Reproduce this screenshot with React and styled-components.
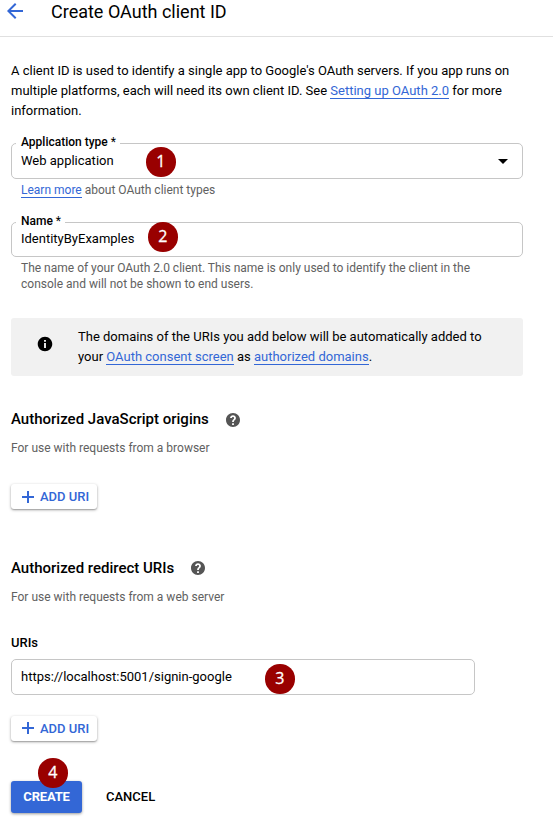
import React from 'react';
import styled, { createGlobalStyle } from 'styled-components';

const GlobalStyle = createGlobalStyle`
  * { box-sizing: border-box; }
  body {
    margin: 0;
    background: #fff;
    color: #000;
    font-family: Roboto, "Liberation Sans", sans-serif;
    font-size: 13px;
    line-height: 20px;
    overflow: hidden;
  }
`;

const Page = styled.div`
  width: 553px;
  height: 821px;
  background: #fff;
`;

const Header = styled.header`
  display: flex;
  align-items: flex-start;
  height: 37px;
  padding-left: 3px;
  border-bottom: 1px solid #e0e0e0;
`;

const BackIcon = styled.svg`
  width: 24px;
  height: 24px;
  margin: -1px 24px 0 0;
  fill: #3367d6;
`;

const Title = styled.h1`
  margin: 0;
  font-size: 18px;
  font-weight: 400;
  line-height: 24px;
  white-space: nowrap;
`;

const Main = styled.main`
  display: flex;
  flex-direction: column;
  align-items: flex-start;
  padding: 24px 0 0 11px;
`;

const Paragraph = styled.p`
  margin: 0;
  white-space: nowrap;
`;

const Link = styled.a`
  color: #3367d6;
  text-decoration: none;
  box-shadow: inset 0 -1px 0 #3367d6;
  display: inline-block;
  line-height: 16px;
`;

const Field = styled.div`
  position: relative;
  display: flex;
  align-items: center;
  justify-content: space-between;
  width: ${(p) => p.$width || 512}px;
  height: ${(p) => p.$height || 36}px;
  margin-top: ${(p) => p.$gap}px;
  padding: 0 9px;
  border: 1px solid #c6c6c6;
  border-radius: 5px;
`;

const FieldValue = styled.span`
  line-height: 18px;
  padding-bottom: ${(p) => p.$lift || 0}px;
`;

const FieldLabel = styled.label`
  position: absolute;
  top: -10px;
  left: 4px;
  padding: 0 4px 0 5px;
  background: #fff;
  font-size: 12px;
  font-weight: 500;
  line-height: 16px;
  white-space: nowrap;
`;

const Required = styled.span`
  font-weight: 400;
`;

const Caret = styled.svg`
  width: 10px;
  height: 5px;
  margin-right: 5px;
  fill: #000;
`;

const Hint = styled.p`
  margin: ${(p) => p.$gap}px 0 0 ${(p) => p.$indent || 0}px;
  color: #616161;
  font-size: 12px;
  line-height: 16px;
  white-space: nowrap;
`;

const Notice = styled.aside`
  display: flex;
  align-items: center;
  width: 512px;
  height: 58px;
  margin-top: 26px;
  padding-left: 26px;
  border-radius: 3px;
  background: #f1f1f1;
`;

const NoticeIcon = styled.svg`
  width: 16px;
  height: 16px;
  margin: -6px 25px 0 0;
  fill: #000;
`;

const SectionHead = styled.div`
  display: flex;
  align-items: center;
  gap: 17px;
  height: 24px;
  margin-top: ${(p) => p.$gap}px;
`;

const SectionTitle = styled.h2`
  margin: 0;
  font-size: 15px;
  font-weight: 500;
  white-space: nowrap;
`;

const HelpIcon = styled.svg`
  width: 14px;
  height: 14px;
  margin-top: ${(p) => p.$drop || 0}px;
  fill: #555;
`;

const AddButton = styled.button`
  display: flex;
  align-items: center;
  width: 86px;
  height: 25px;
  margin-top: ${(p) => p.$gap}px;
  padding: 0 0 0 11px;
  border: 0;
  border-radius: 3px;
  background: #fff;
  color: #3367d6;
  box-shadow: 0 1px 3px rgba(0, 0, 0, 0.35), 0 1px 1px rgba(0, 0, 0, 0.14);
  font: 500 13px/24px Roboto, sans-serif;
  white-space: nowrap;
`;

const PlusIcon = styled.svg`
  width: 12px;
  height: 12px;
  margin: ${(p) => p.$shift}px 6px 0 0;
  stroke: #3367d6;
  stroke-width: 2;
`;

const GroupLabel = styled.div`
  margin-top: 28px;
  font-size: 13px;
  font-weight: 500;
`;

const Actions = styled.div`
  position: relative;
  display: flex;
  gap: 24px;
  height: 32px;
  margin-top: 40px;
`;

const ActionButton = styled.button`
  height: 32px;
  width: ${(p) => (p.$primary ? '71px' : 'auto')};
  padding: 0;
  border: 0;
  border-radius: 3px;
  background: ${(p) => (p.$primary ? '#3367d6' : 'transparent')};
  color: ${(p) => (p.$primary ? '#fff' : '#000')};
  box-shadow: ${(p) => (p.$primary ? '0 1px 3px rgba(0, 0, 0, 0.4)' : 'none')};
  font: ${(p) => (p.$primary ? 700 : 500)} 13px/32px Roboto, sans-serif;
  letter-spacing: ${(p) => (p.$primary ? '-0.2px' : '0')};
  white-space: nowrap;
`;

const StepBadge = styled.span`
  position: absolute;
  left: ${(p) => p.$left}px;
  top: ${(p) => p.$top}px;
  width: 29.5px;
  height: 29.5px;
  border-radius: 50%;
  background: #990000;
  color: #fff;
  -webkit-text-stroke: 0.3px #fff;
  font-family: "Open Sans", sans-serif;
  font-size: 16px;
  line-height: 29px;
  text-align: center;
`;

function Help({ drop }) {
  return (
    <HelpIcon $drop={drop} viewBox="2 2 20 20">
      <path d="M12 2C6.48 2 2 6.48 2 12s4.48 10 10 10 10-4.48 10-10S17.52 2 12 2zm1.300 17.200h-2.600v-2.600h2.600v2.600zm2-7.700l-.9.92C13.700 13.100 13.300 13.600 13.300 15h-2.600v-.5c0-1.1.45-2.1 1.17-2.83l1.24-1.26c.3-.3.45-.7.45-1.150 0-.9-.7-1.600-1.560-1.600s-1.600.7-1.600 1.600H7.800c0-2.310 1.89-4.200 4.200-4.200s4.200 1.890 4.200 4.200c0 .88-.36 1.680-.9 2.240z" />
    </HelpIcon>
  );
}

function AddUri({ gap, shift }) {
  return (
    <AddButton $gap={gap}>
      <PlusIcon $shift={shift} viewBox="0 0 12 12"><path d="M6 0v12M0 6h12" /></PlusIcon>
      ADD URI
    </AddButton>
  );
}

export default function App() {
  return (
    <Page>
      <GlobalStyle />
      <Header>
        <BackIcon viewBox="0 0 24 24">
          <path d="M20 11H7.83l5.59-5.59L12 4l-8 8 8 8 1.41-1.41L7.83 13H20v-2z" />
        </BackIcon>
        <Title>Create OAuth client ID</Title>
      </Header>
      <Main>
        <Paragraph>
          A client ID is used to identify a single app to Google's OAuth servers. If you app runs on<br />
          multiple platforms, each will need its own client ID. See <Link>Setting up OAuth 2.0</Link> for more<br />
          information.
        </Paragraph>

        <Field $gap={22}>
          <FieldLabel>Application type <Required>*</Required></FieldLabel>
          <FieldValue>Web application</FieldValue>
          <Caret viewBox="0 0 10 5"><path d="M0 0h10L5 5z" /></Caret>
          <StepBadge $left={134} $top={3}>1</StepBadge>
        </Field>
        <Hint $gap={3} $indent={10}><Link>Learn more</Link> about OAuth client types</Hint>

        <Field $gap={24} $height={35}>
          <FieldLabel>Name <Required>*</Required></FieldLabel>
          <FieldValue $lift={2}>IdentityByExamples</FieldValue>
          <StepBadge $left={136} $top={-1}>2</StepBadge>
        </Field>
        <Hint $gap={3} $indent={10}>
          The name of your OAuth 2.0 client. This name is only used to identify the client in the<br />
          console and will not be shown to end users.
        </Hint>

        <Notice>
          <NoticeIcon viewBox="1 1 22 22">
            <path d="M12 2C6.48 2 2 6.48 2 12s4.48 10 10 10 10-4.48 10-10S17.52 2 12 2zm1.3 15.500h-2.600v-7h2.600v7zm0-8.500h-2.600V6.500h2.600V9z" />
          </NoticeIcon>
          <Paragraph>
            The domains of the URIs you add below will be automatically added to<br />
            your <Link>OAuth consent screen</Link> as <Link>authorized domains</Link>.
          </Paragraph>
        </Notice>

        <SectionHead $gap={31}>
          <SectionTitle>Authorized JavaScript origins</SectionTitle>
          <Help drop={2} />
        </SectionHead>
        <Hint $gap={9}>For use with requests from a browser</Hint>
        <AddUri gap={28} shift={1} />

        <SectionHead $gap={47}>
          <SectionTitle>Authorized redirect URIs</SectionTitle>
          <Help />
        </SectionHead>
        <Hint $gap={9}>For use with requests from a web server</Hint>
        <GroupLabel>URIs</GroupLabel>
        <Field $gap={6} $width={464}>
          <FieldValue>https://localhost:5001/signin-google</FieldValue>
          <StepBadge $left={253} $top={4}>3</StepBadge>
        </Field>
        <AddUri gap={21} shift={-1} />

        <Actions>
          <ActionButton $primary>CREATE</ActionButton>
          <ActionButton>CANCEL</ActionButton>
          <StepBadge $left={27} $top={-23}>4</StepBadge>
        </Actions>
      </Main>
    </Page>
  );
}
